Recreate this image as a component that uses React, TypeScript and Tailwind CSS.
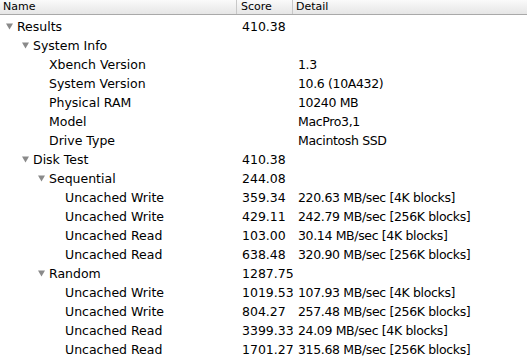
import React from 'react';

type Row = {
  name: string;
  level: number;
  group?: boolean;
  score?: string;
  detail?: string;
};

const rows: Row[] = [
  { name: 'Results', level: 0, group: true, score: '410.38' },
  { name: 'System Info', level: 1, group: true },
  { name: 'Xbench Version', level: 2, detail: '1.3' },
  { name: 'System Version', level: 2, detail: '10.6 (10A432)' },
  { name: 'Physical RAM', level: 2, detail: '10240 MB' },
  { name: 'Model', level: 2, detail: 'MacPro3,1' },
  { name: 'Drive Type', level: 2, detail: 'Macintosh SSD' },
  { name: 'Disk Test', level: 1, group: true, score: '410.38' },
  { name: 'Sequential', level: 2, group: true, score: '244.08' },
  { name: 'Uncached Write', level: 3, score: '359.34', detail: '220.63 MB/sec [4K blocks]' },
  { name: 'Uncached Write', level: 3, score: '429.11', detail: '242.79 MB/sec [256K blocks]' },
  { name: 'Uncached Read', level: 3, score: '103.00', detail: '30.14 MB/sec [4K blocks]' },
  { name: 'Uncached Read', level: 3, score: '638.48', detail: '320.90 MB/sec [256K blocks]' },
  { name: 'Random', level: 2, group: true, score: '1287.75' },
  { name: 'Uncached Write', level: 3, score: '1019.53', detail: '107.93 MB/sec [4K blocks]' },
  { name: 'Uncached Write', level: 3, score: '804.27', detail: '257.48 MB/sec [256K blocks]' },
  { name: 'Uncached Read', level: 3, score: '3399.33', detail: '24.09 MB/sec [4K blocks]' },
  { name: 'Uncached Read', level: 3, score: '1701.27', detail: '315.68 MB/sec [256K blocks]' },
];

const Disclosure = () => (
  <svg width="7" height="7" viewBox="0 0 7 7" className="shrink-0">
    <path d="M0 0.5 L7 0.5 L3.5 6.5 Z" fill="#8a8a8a" />
  </svg>
);

const App: React.FC = () => {
  return (
    <div className="w-[527px] h-[364px] overflow-hidden bg-white font-['DejaVu_Sans',sans-serif] text-black">
      {/* Column headers */}
      <div className="flex h-[15px] border-b border-[#a9a9a9] bg-gradient-to-b from-[#fafafa] to-[#e6e6e6] text-[11px] leading-[14px]">
        <div className="w-[237px] pl-[3px] border-r border-[#c8c8c8]">Name</div>
        <div className="w-[56px] pl-[4px] border-r border-[#c8c8c8]">Score</div>
        <div className="flex-1 pl-[3px]">Detail</div>
      </div>

      {/* Outline rows */}
      <div className="pt-[2px] text-[12.5px] leading-[19px]">
        {rows.map((r, i) => (
          <div key={i} className="flex h-[19px] whitespace-nowrap">
            <div
              className="w-[238px] flex items-center"
              style={{ paddingLeft: 6 + r.level * 16 }}
            >
              {r.group ? <Disclosure /> : <span className="w-[7px] shrink-0" />}
              <span className="pl-[4px]">{r.name}</span>
            </div>
            <div className="w-[55px] overflow-hidden pl-[4px]">{r.score}</div>
            <div className="flex-1 pl-[5px] tracking-[-0.35px]">{r.detail}</div>
          </div>
        ))}
      </div>
    </div>
  );
};

export default App;
